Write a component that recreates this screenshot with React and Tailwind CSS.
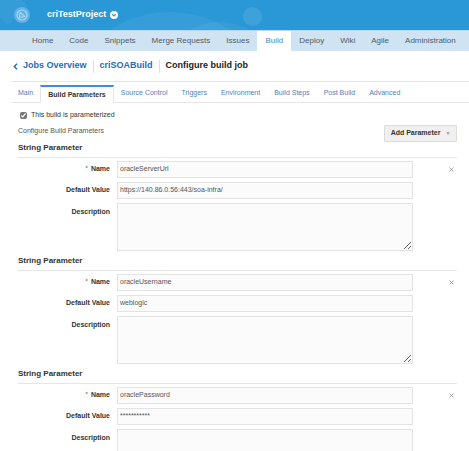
import { X } from 'lucide-react';

const navItems = ['Home', 'Code', 'Snippets', 'Merge Requests', 'Issues', 'Build', 'Deploy', 'Wiki', 'Agile', 'Administration'];
const tabs = ['Main', 'Build Parameters', 'Source Control', 'Triggers', 'Environment', 'Build Steps', 'Post Build', 'Advanced'];

const params = [
    { name: 'oracleServerUrl', value: 'https://140.86.0.56:443/soa-infra/' },
    { name: 'oracleUsername', value: 'weblogic' },
    { name: 'oraclePassword', value: '***********' },
];

function ParamSection({ param, first }) {
    return (
        <div className={first ? 'mt-0' : 'mt-[4px]'}>
            <div className="h-[16px] pb-[3px] border-b border-[#e6e6e6] text-[8px] leading-[12px] font-bold text-[#333]">
                String Parameter
            </div>
            <div className="mt-[3px] flex flex-col gap-[4px]">
                <div className="flex items-center h-[17px]">
                    <div className="w-[99px] text-right pr-[7px] text-[7px] font-bold text-[#333] whitespace-nowrap">
                        <span className="text-[#d9534f] text-[6px] align-top mr-[3px]">*</span>Name
                    </div>
                    <div className="w-[296px] h-[17px] border border-[#e3e3e3] bg-[#fbfbfb] px-[2px] flex items-center text-[7px] text-[#555]">
                        {param.name}
                    </div>
                    <div className="ml-auto mr-[2px] text-[#888]">
                        <X size={7} strokeWidth={2.5} />
                    </div>
                </div>
                <div className="flex items-center h-[17px]">
                    <div className="w-[99px] text-right pr-[7px] text-[7px] font-bold text-[#333] whitespace-nowrap">Default Value</div>
                    <div className="w-[296px] h-[17px] border border-[#e3e3e3] bg-[#fbfbfb] px-[2px] flex items-center text-[7px] text-[#555]">
                        {param.value}
                    </div>
                </div>
                <div className="flex items-start h-[48px]">
                    <div className="w-[99px] text-right pr-[7px] pt-[4px] text-[7px] font-bold text-[#333]">Description</div>
                    <textarea readOnly className="w-[296px] h-[48px] border border-[#e3e3e3] bg-[#fbfbfb] outline-none" />
                </div>
            </div>
        </div>
    );
}

export default function App() {
    return (
        <div className="w-[469px] h-[451px] overflow-hidden bg-white font-['Liberation_Sans',Arial,sans-serif]">
            {/* Header */}
            <div className="relative h-[30px] bg-[#2a97d6] overflow-hidden">
                <div className="absolute left-[60px] top-[12px] w-[220px] h-[220px] rounded-full bg-white/[0.06]" />
                <div className="absolute left-[160px] top-[22px] w-[120px] h-[120px] rounded-full bg-white/[0.05]" />
                <div className="absolute left-[243px] top-[7px] w-[19px] h-[19px] rounded-full bg-white/[0.1]" />
                <div className="absolute left-[-6px] top-[-8px] w-[28px] h-[28px] rotate-45 bg-white/[0.05]" />
                <div className="relative flex items-center h-full pl-[14px]">
                    <svg width="16" height="16" viewBox="0 0 16 16">
                        <circle cx="8" cy="8" r="8" fill="#5fb3e6" />
                        <circle cx="8" cy="8" r="5" fill="none" stroke="#a9d6f2" strokeWidth="1.2" />
                        <path d="M6 5.5 L11 9.5 L5.5 10.5 Z" fill="none" stroke="#a9d6f2" strokeWidth="1.1" strokeLinejoin="round" />
                    </svg>
                    <span className="ml-[17px] text-white font-bold text-[9px]">criTestProject</span>
                    <svg className="ml-[4px]" width="8" height="8" viewBox="0 0 10 10">
                        <circle cx="5" cy="5" r="5" fill="white" />
                        <path d="M2.8 4 L5 6.2 L7.2 4" fill="none" stroke="#2a97d6" strokeWidth="1.6" />
                    </svg>
                </div>
            </div>

            {/* Nav */}
            <div className="h-[21px] bg-[#cfe3f3] flex items-stretch pl-[24px] border-t border-[#b9d6ee]">
                {navItems.map(item => (
                    <div
                        key={item}
                        className={`flex items-center whitespace-nowrap px-[8px] text-[8px] ${item === 'Build' ? 'bg-white text-[#4a86c5]' : 'text-[#4d5b68]'}`}
                    >
                        {item}
                    </div>
                ))}
            </div>

            <div className="pl-[11px]">
                {/* Breadcrumb */}
                <div className="h-[31px] flex items-center border-b border-[#e6e6e6] text-[9px] font-bold">
                    <svg className="ml-[2px]" width="5" height="7" viewBox="0 0 5 7">
                        <path d="M4 0.8 L1.3 3.5 L4 6.2" fill="none" stroke="#2a6cb3" strokeWidth="1.5" />
                    </svg>
                    <span className="ml-[5px] text-[#2a6cb3]">Jobs Overview</span>
                    <span className="mx-[6px] w-px h-[13px] bg-[#ddd]" />
                    <span className="text-[#2a6cb3]">criSOABuild</span>
                    <span className="mx-[6px] w-px h-[13px] bg-[#ddd]" />
                    <span className="text-[#222]">Configure build job</span>
                </div>

                {/* Tabs */}
                <div className="h-[21px] pt-[3px] flex items-stretch border-b border-[#e6e6e6]">
                    {tabs.map(tab => (
                        <div
                            key={tab}
                            className={`flex items-center px-[7px] whitespace-nowrap text-[7px] ${tab === 'Build Parameters' ? 'bg-white border-t-2 border-[#3b8fd6] border-x border-x-[#e6e6e6] font-bold text-[#333] -mb-px' : 'text-[#4f7fb9]'}`}
                        >
                            {tab}
                        </div>
                    ))}
                </div>

                <div className="pl-[7px] pr-[12px]">
                    <div className="h-[22px] pt-[2px] flex items-center pl-[2px]">
                        <input type="checkbox" defaultChecked className="w-[7px] h-[7px] accent-[#777]" />
                        <span className="ml-[4px] text-[7px] text-[#333]">This build is parameterized</span>
                    </div>
                    <div className="h-[17px] flex items-start">
                        <span className="text-[7px] text-[#555] leading-[10px] mt-[1px]">Configure Build Parameters</span>
                        <button className="ml-auto h-[17px] w-[73px] bg-[#f0f0f0] border border-[#dcdcdc] rounded-[1px] text-[7px] font-bold text-[#333] flex items-center justify-center">
                            Add Parameter
                            <span className="ml-[5px] text-[#999] text-[5px]">&#9660;</span>
                        </button>
                    </div>

                    {params.map((p, i) => (
                        <ParamSection key={p.name} param={p} first={i === 0} />
                    ))}
                </div>
            </div>
        </div>
    );
}
